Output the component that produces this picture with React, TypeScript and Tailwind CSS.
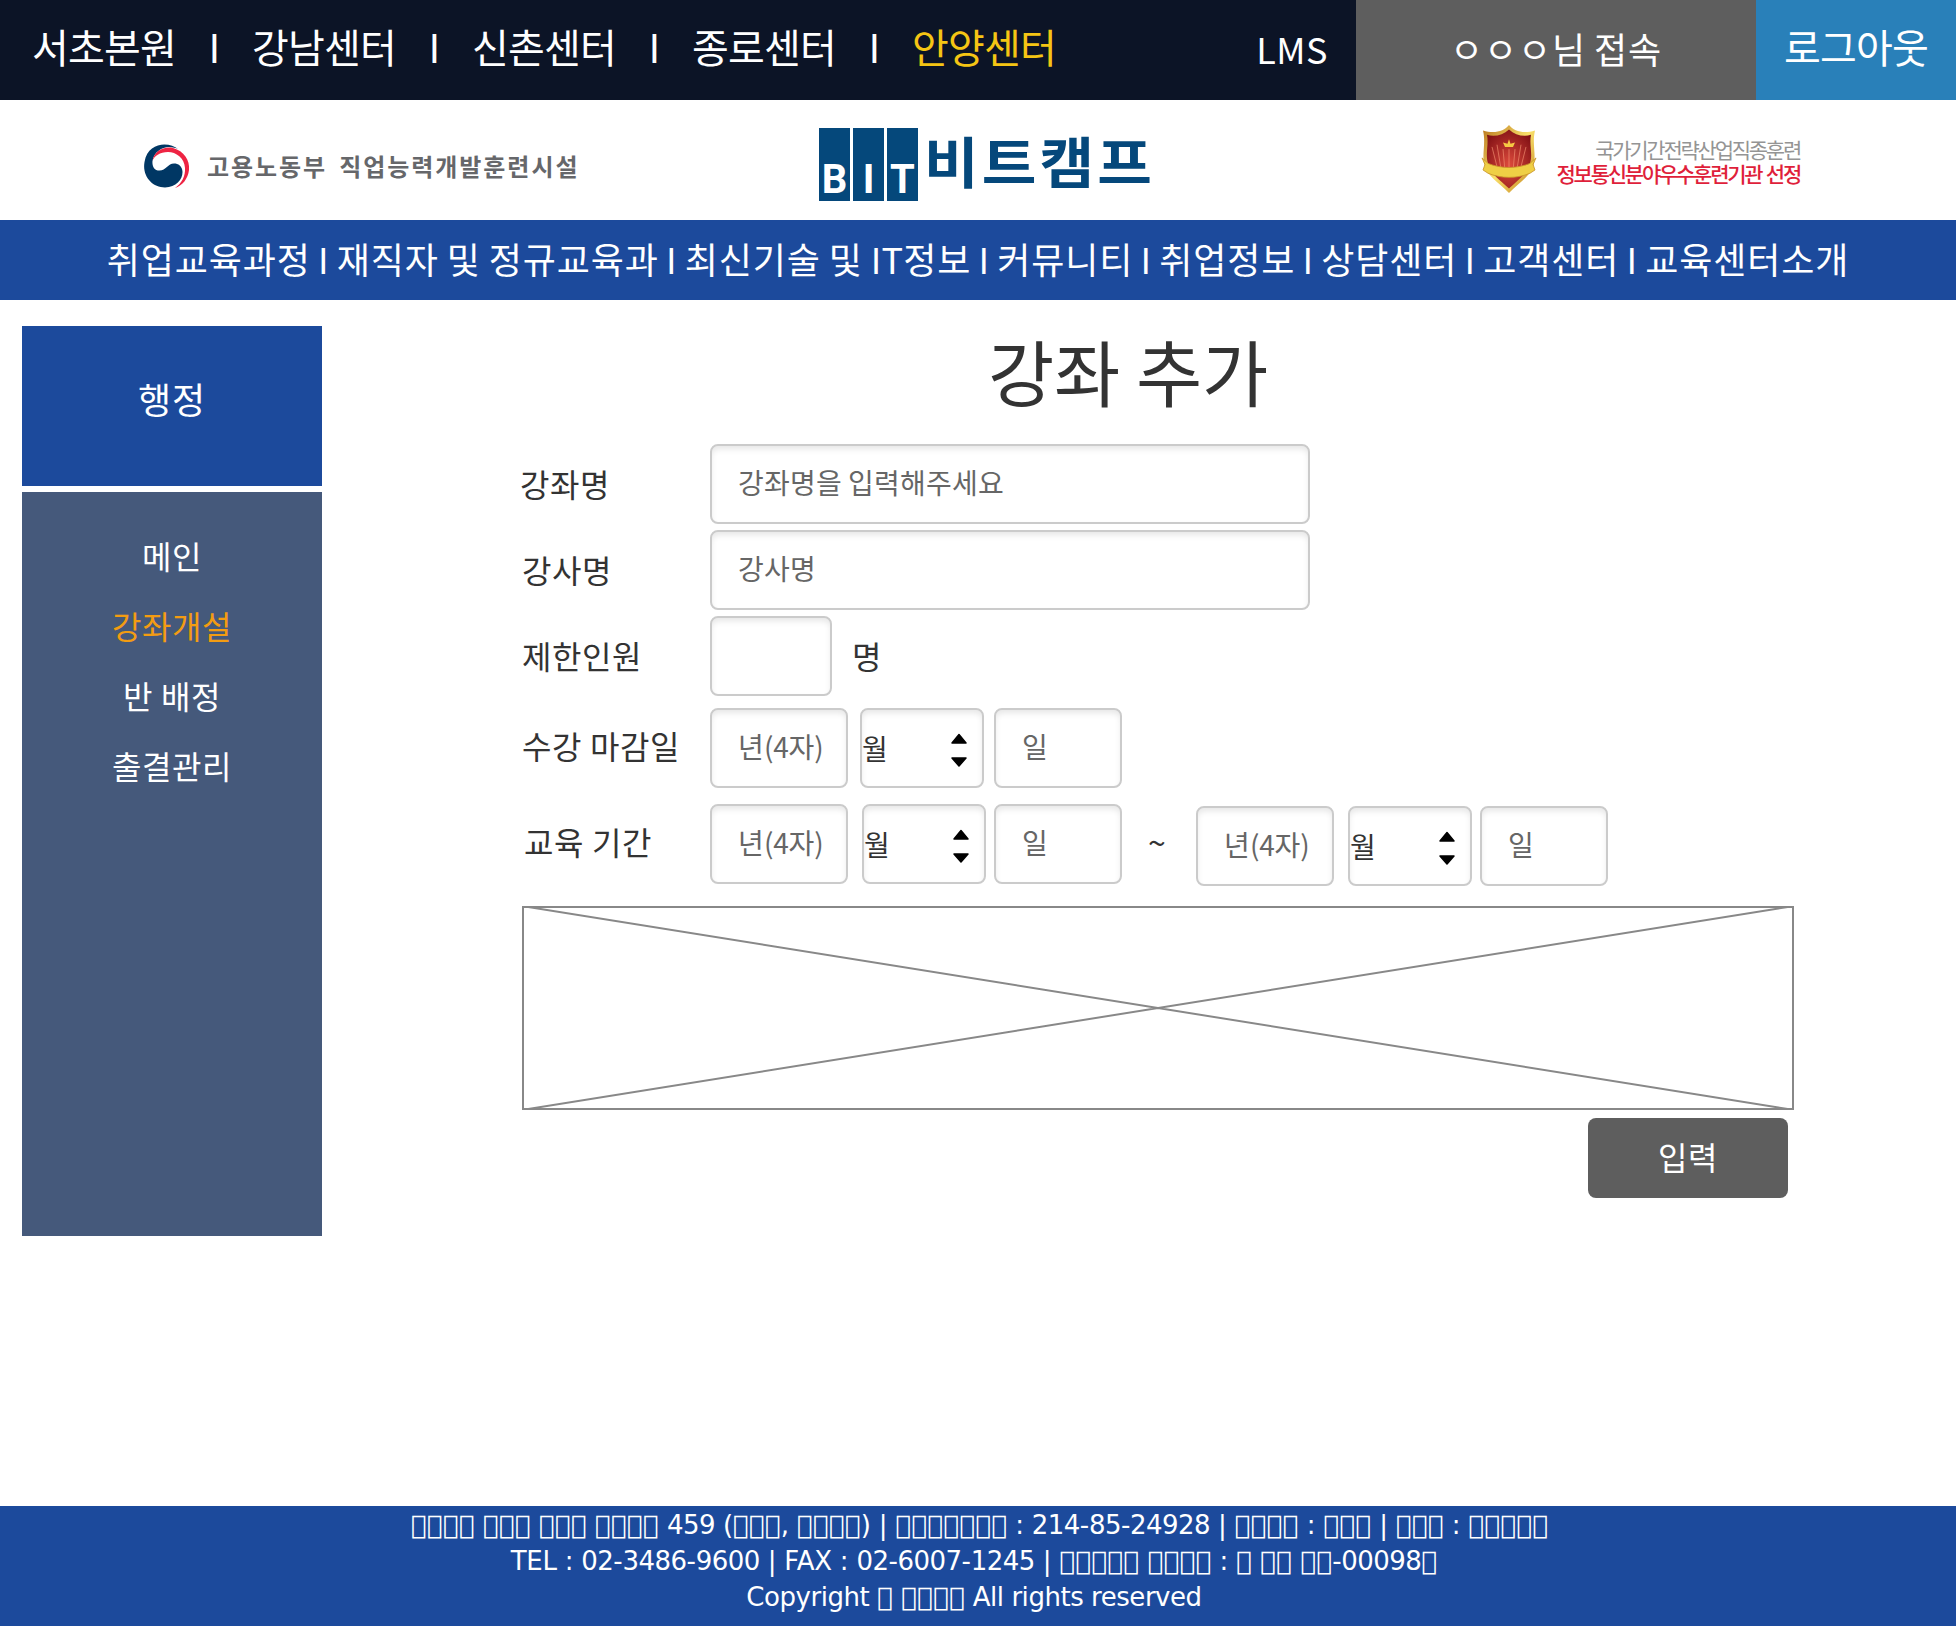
import React from 'react';

const centers = ['서초본원', '강남센터', '신촌센터', '종로센터', '안양센터'];

const menu: React.ReactNode[] = [
  '취업교육과정',
  '재직자 및 정규교육과',
  <>
    최신기술 및 <span className="tracking-[0.2px]">IT</span>정보
  </>,
  '커뮤니티',
  '취업정보',
  '상담센터',
  '고객센터',
  '교육센터소개',
];

const sideMenu = ['메인', '강좌개설', '반 배정', '출결관리'];

const footerLines = [
  {
    text: '\uE000\uE000\uE000\uE000 \uE000\uE000\uE000 \uE000\uE000\uE000 \uE000\uE000\uE000\uE000 459 (\uE000\uE000\uE000, \uE000\uE000\uE000\uE000) | \uE000\uE000\uE000\uE000\uE000\uE000\uE000 : 214-85-24928 | \uE000\uE000\uE000\uE000 : \uE000\uE000\uE000 | \uE000\uE000\uE000 : \uE000\uE000\uE000\uE000\uE000',
    row: 'pl-[3px]',
    tracking: 'tracking-[-0.26px]',
  },
  {
    text: 'TEL : 02-3486-9600 | FAX : 02-6007-1245 | \uE000\uE000\uE000\uE000\uE000 \uE000\uE000\uE000\uE000 : \uE000 \uE000\uE000 \uE000\uE000-00098\uE000',
    row: 'pr-[8px]',
    tracking: 'tracking-[-0.23px]',
  },
  {
    text: 'Copyright \uE000 \uE000\uE000\uE000\uE000 All rights reserved',
    row: 'pr-[8px]',
    tracking: 'tracking-[-0.46px]',
  },
];

const t36 = 'text-[36px] leading-[52px] tracking-[0.88px] [word-spacing:-0.94px] whitespace-nowrap';
const t32 = 'text-[32px] leading-[46px] tracking-[0.56px] [word-spacing:0.27px] whitespace-nowrap';
const t28 = 'text-[28px] leading-[40px] tracking-[0.24px] [word-spacing:-0.5px] whitespace-nowrap';

const box =
  'h-20 shrink-0 rounded-[8px] border-2 border-[#cbcbcb] bg-white shadow-[inset_0_4px_6px_-1px_rgba(0,0,0,0.1)] flex items-center';

function Field({ width, children }: { width: string; children?: React.ReactNode }) {
  return (
    <div className={`${box} ${width} pl-[26px] pr-6 pb-1 text-[#666666] ${t28}`}>
      <div className="w-full overflow-hidden">{children}</div>
    </div>
  );
}

function YearField() {
  return (
    <Field width="w-[138px]">
      년<span className="tracking-[-0.2px]">(4자)</span>
    </Field>
  );
}

function MonthSelect() {
  return (
    <div className={`${box} w-[124px] justify-between text-[#333333] ${t28}`}>
      <span>월</span>
      <svg className="mr-[14px] mt-[3px] h-9 w-[18px]" viewBox="0 0 18 36">
        <path d="M9 2.5 L16 11 H2 Z M9 34 L16 26 H2 Z" fill="#000" stroke="#000" strokeWidth="1.5" strokeLinejoin="round" />
      </svg>
    </div>
  );
}

function Label({ children, className }: { children: React.ReactNode; className: string }) {
  return <div className={`shrink-0 text-[#333333] ${t32} ${className}`}>{children}</div>;
}

function FooterLine({ text, row, tracking }: { text: string; row: string; tracking: string }) {
  const runs = text.match(/\uE000+|[0-9]+|[^\uE0000-9]+/g) ?? [];
  return (
    <p className={row}>
      {runs.map((run, i) => (
        <span
          key={i}
          className={run[0] === '\uE000' ? 'tracking-[0.4px]' : /[0-9]/.test(run[0]) ? 'tracking-[-0.54px]' : tracking}
        >
          {run}
        </span>
      ))}
    </p>
  );
}

function MinistryLogo() {
  return (
    <div className="ml-[144px] flex items-center">
      <svg className="h-[46px] w-[47px]" viewBox="0 -1 47 46">
        <path
          d="M34 5 C26 -2 4 -3 0.5 18 C-2 32 8 43.5 21 43.5 C32 43 38.5 36 38.5 28 C38.5 22 34 19.5 30 19.5 C24 19.5 22 26.5 15.5 26.5 C10 26.5 8 22 8.5 17 C10 8 18 3 25 3 C29 3 32 4 34 5 Z"
          fill="#003764"
        />
        <path
          d="M8.5 17 C10 7 20 2 29 4 C40 7 46 16 45 26 C44 35 38 42 31 44 C38 39 41.5 32 41 24 C40.5 14 32 8 24 8 C16 8 10 12 8.5 17 Z"
          fill="#ee2443"
        />
      </svg>
      <span className="ml-4 whitespace-nowrap text-[24px] font-bold leading-[36px] tracking-[1.95px] text-[#66676a] [word-spacing:4.6px]">
        고용노동부 직업능력개발훈련시설
      </span>
    </div>
  );
}

function BitLogo() {
  return (
    <div className="flex items-start text-[#05487b]">
      <div className="flex gap-[3px]">
        {['B', 'I', 'T'].map((c) => (
          <div
            key={c}
            className="flex h-[73px] w-[31px] items-end justify-center bg-[#05487b] font-[Roboto] text-[40px] font-bold leading-[42px] text-white"
          >
            {c}
          </div>
        ))}
      </div>
      <span className="ml-[6px] inline-block origin-left scale-x-[1.08] whitespace-nowrap text-[55px] font-bold leading-[62px] tracking-[2.9px]">
        비트캠프
      </span>
    </div>
  );
}

function AwardLogo() {
  return (
    <div className="flex items-start">
      <svg className="h-[68px] w-[56px]" viewBox="0 2 56 62" preserveAspectRatio="none">
        <defs>
          <linearGradient id="gold" x1="0" y1="0" x2="1" y2="1">
            <stop offset="0" stopColor="#b8741c" />
            <stop offset="0.5" stopColor="#f9e06a" />
            <stop offset="1" stopColor="#c27f1b" />
          </linearGradient>
          <radialGradient id="crimson" cx="0.5" cy="0.6" r="0.7">
            <stop offset="0" stopColor="#dd4a3c" />
            <stop offset="1" stopColor="#7c0d12" />
          </radialGradient>
        </defs>
        <path
          d="M28 2 C33 8 43 10 54 7 C51 18 55 28 53 37 C50 49 38 54 28 64 C18 54 6 49 3 37 C1 28 5 18 2 7 C13 10 23 8 28 2 Z"
          fill="url(#gold)"
        />
        <path
          d="M28 6 C34 11 42 13 50 11 C48 20 52 28 49 37 C46 47 37 52 28 60 C19 52 10 47 7 37 C4 28 8 20 6 11 C14 13 22 11 28 6 Z"
          fill="url(#crimson)"
        />
        <path
          d="M28 24 V44 M22 24 L24 44 M34 24 L32 44 M16 20 L20 42 M40 20 L36 42 M11 22 L16 40 M45 22 L40 40"
          stroke="#ef8a6c"
          strokeWidth="0.9"
          opacity="0.75"
        />
        <path d="M28 15 L29.5 19 L34 18 L32 22 H24 L22 18 L26.5 19 Z" fill="#f6c944" />
        <path
          d="M1 32 L7 37 C20 42 36 42 49 37 L55 32 L52 38 L54 43 L49 46 C36 51 20 51 7 46 L2 43 L4 38 Z"
          fill="#efcf45"
          stroke="#c9952a"
          strokeWidth="0.8"
        />
      </svg>
      <div className="ml-[14px] mt-[12px] flex w-[249px] flex-col items-end whitespace-nowrap">
        <span className="text-[21px] leading-[24px] tracking-[-2.25px] text-[#949494]">국가기간전략산업직종훈련</span>
        <span className="text-[21px] font-medium leading-[24px] tracking-[-2.25px] text-[#df1f3b] [word-spacing:2px]">
          정보통신분야우수훈련기관 선정
        </span>
      </div>
    </div>
  );
}

export default function App() {
  return (
    <div className="flex h-[1626px] w-[1956px] flex-col overflow-hidden bg-white font-['Noto_Sans_CJK_KR',sans-serif]">
      <div className="flex h-[100px] shrink-0 bg-[#0c1426] text-white">
        <div className="flex w-[1356px] items-center justify-between pl-8 pr-[28px]">
          <div className="flex whitespace-nowrap pb-[8px] text-[40px] leading-[58px] tracking-[-0.8px]">
            {centers.map((name, i) => (
              <React.Fragment key={name}>
                {i > 0 && <span className="w-[76px] text-center">I</span>}
                <span className={`w-[144px] ${i === 4 ? 'text-[#f5c514]' : ''}`}>{name}</span>
              </React.Fragment>
            ))}
          </div>
          <span className="whitespace-nowrap pb-1 text-[36px] leading-[52px] tracking-[0.5px]">LMS</span>
        </div>
        <div className={`flex w-[400px] items-center justify-center bg-[#5e5e5e] pb-1 ${t36}`}>ㅇㅇㅇ님 접속</div>
        <div className="flex w-[200px] items-center justify-center bg-[#2980b9] pb-[8px] text-[40px] leading-[58px] tracking-[-0.8px]">
          로그아웃
        </div>
      </div>

      <header className="flex h-[120px] shrink-0 items-start">
        <div className="w-[819px] pt-[43px]">
          <MinistryLogo />
        </div>
        <div className="w-[662px] pt-[28px]">
          <BitLogo />
        </div>
        <div className="pt-[25px]">
          <AwardLogo />
        </div>
      </header>

      <nav className={`flex h-20 shrink-0 items-center justify-center bg-[#1c4a9c] pb-[5px] text-white ${t36}`}>
        {menu.map((name, i) => (
          <React.Fragment key={i}>
            {i > 0 && <span className="w-[26px] text-center">I</span>}
            <span>{name}</span>
          </React.Fragment>
        ))}
      </nav>

      <div className="flex grow">
        <aside className="ml-[22px] mt-[26px] flex w-[300px] shrink-0 flex-col gap-[6px] text-white">
          <div className={`flex h-40 items-center justify-center bg-[#1c4a9c] pb-[17px] ${t36}`}>행정</div>
          <ul className={`flex h-[744px] flex-col items-center gap-6 bg-[#45597b] pt-[40px] ${t32}`}>
            {sideMenu.map((name, i) => (
              <li key={name} className={i === 1 ? 'text-[#f39c12]' : ''}>
                {name}
              </li>
            ))}
          </ul>
        </aside>

        <main className="ml-[198px] flex w-[1274px] flex-col">
          <h1 className="ml-[216px] mt-[18px] h-[126px] w-[784px] text-center text-[72px] leading-[104px] tracking-[-0.24px] text-[#333333]">
            강좌 추가
          </h1>
          <div className="flex">
            <Label className="w-[190px] pt-[16px]">강좌명</Label>
            <Field width="w-[600px]">강좌명을 입력해주세요</Field>
          </div>
          <div className="mt-[6px] flex">
            <Label className="w-[190px] pl-[2px] pt-[16px]">강사명</Label>
            <Field width="w-[600px]">강사명</Field>
          </div>
          <div className="mt-[6px] flex">
            <Label className="w-[190px] pl-[2px] pt-[16px]">제한인원</Label>
            <Field width="w-[122px]" />
            <Label className="pl-5 pt-[16px]">명</Label>
          </div>
          <div className="mt-3 flex">
            <Label className="w-[190px] pl-[2px] pt-[14px]">수강 마감일</Label>
            <div className="flex">
              <YearField />
              <div className="ml-3">
                <MonthSelect />
              </div>
              <div className="ml-[10px]">
                <Field width="w-[128px]">일</Field>
              </div>
            </div>
          </div>
          <div className="mt-4 flex">
            <Label className="w-[190px] pl-1 pt-[14px]">교육 기간</Label>
            <div className="flex">
              <YearField />
              <div className="ml-[14px]">
                <MonthSelect />
              </div>
              <div className="ml-2">
                <Field width="w-[128px]">일</Field>
              </div>
            </div>
            <Label className="w-[74px] pl-[26px] pt-[14px]">~</Label>
            <div className="mt-[2px] flex">
              <YearField />
              <div className="ml-[14px]">
                <MonthSelect />
              </div>
              <div className="ml-2">
                <Field width="w-[128px]">일</Field>
              </div>
            </div>
          </div>
          <div className="ml-[2px] mt-5 h-[204px] w-[1272px] border-2 border-[#888888]">
            <svg className="h-full w-full" viewBox="2 2 1268 200" preserveAspectRatio="none">
              <path d="M0 0 L1272 204 M0 204 L1272 0" stroke="#888888" strokeWidth="2" fill="none" />
            </svg>
          </div>
          <button
            className={`ml-[1068px] mt-2 flex h-20 w-[200px] items-center justify-center rounded-[8px] bg-[#5e5e5e] pb-[5px] text-white ${t32}`}
          >
            입력
          </button>
        </main>
      </div>

      <footer className="h-[120px] shrink-0 bg-[#1c4a9c] pt-[1px] text-center font-['DejaVu_Sans'] text-[26px] leading-[36px] text-white">
        {footerLines.map((line) => (
          <FooterLine key={line.text} {...line} />
        ))}
      </footer>
    </div>
  );
}
